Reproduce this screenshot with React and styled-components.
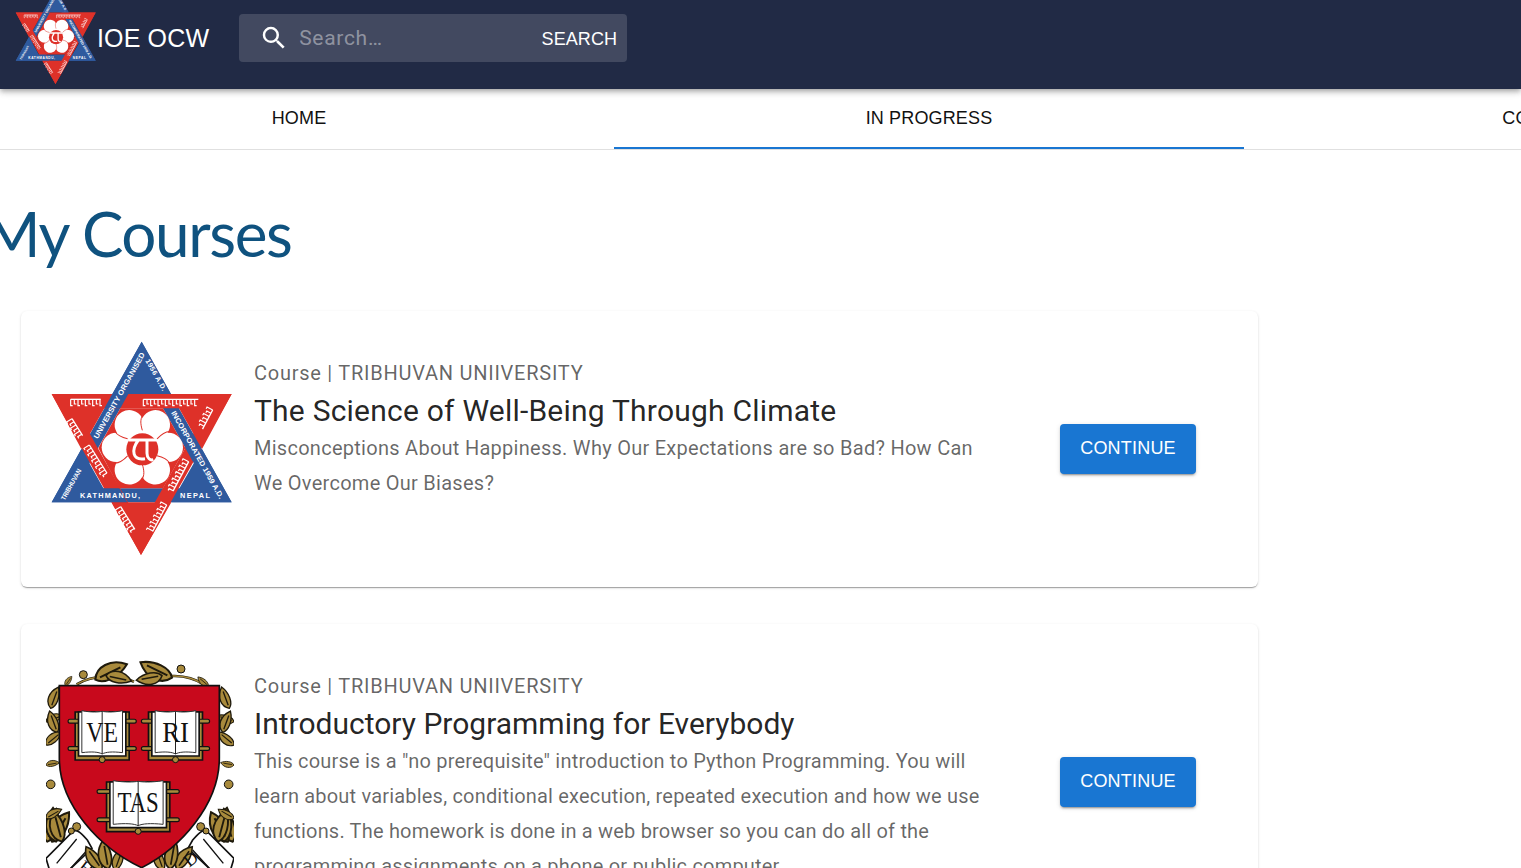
import { MdSearch } from "react-icons/md";
import styled, { createGlobalStyle } from "styled-components";

const GlobalStyle = createGlobalStyle`
    html, body {
        margin: 0;
        height: 868px;
        overflow: hidden;
        background: #fff;
        font-family: "Roboto", "Liberation Sans", sans-serif;
    }
`;

const Page = styled.div`
    width: 1521px;
    height: 868px;
    overflow: hidden;
`;

const Header = styled.header`
    position: relative;
    z-index: 2;
    display: flex;
    align-items: flex-start;
    height: 89px;
    overflow: hidden;
    padding-left: 13px;
    background: #212a45;
    box-shadow: 0 2px 4px -1px rgba(0, 0, 0, 0.2), 0 4px 5px rgba(0, 0, 0, 0.14), 0 1px 10px rgba(0, 0, 0, 0.12);
`;

const LogoBox = styled.div`
    flex: none;
    width: 84px;
    height: 96px;
    margin-top: -11px;
`;

const Brand = styled.div`
    margin: 21px 30px 0 0;
    color: #fff;
    font-family: "Liberation Sans", sans-serif;
    font-size: 25px;
    line-height: 34px;
    letter-spacing: 0.15px;
`;

const Search = styled.form`
    display: flex;
    align-items: center;
    width: 388px;
    height: 48px;
    margin-top: 14px;
    border-radius: 4px;
    background: rgba(255, 255, 255, 0.15);
    color: #fff;

    svg {
        flex: none;
        margin-left: 20px;
    }
`;

const SearchInput = styled.input`
    flex: 1;
    min-width: 0;
    margin-left: 10px;
    padding: 0;
    border: 0;
    outline: 0;
    background: transparent;
    color: #fff;
    font-family: "Roboto", sans-serif;
    font-size: 21px;
    letter-spacing: 0.7px;

    &::placeholder {
        color: rgba(255, 255, 255, 0.42);
        opacity: 1;
    }
`;

const SearchButton = styled.button`
    margin-right: 10px;
    padding: 2px 0 0;
    border: 0;
    background: none;
    color: #fff;
    font-family: "Liberation Sans", sans-serif;
    font-size: 18px;
    letter-spacing: 0.1px;
`;

const Tabs = styled.nav`
    display: flex;
    height: 60px;
    overflow: hidden;
    border-bottom: 1px solid #e0e0e0;
`;

const Tab = styled.a`
    flex: none;
    box-sizing: border-box;
    width: 630px;
    height: 60px;
    padding-top: 19px;
    border-bottom: 2px solid ${(p) => (p.$active ? "#1976d2" : "transparent")};
    margin-left: ${(p) => (p.$first ? "-16px" : "0")};
    color: #111;
    font-family: "Liberation Sans", sans-serif;
    font-size: 18px;
    line-height: 21px;
    letter-spacing: 0.15px;
    text-align: center;
`;

const Main = styled.main`
    padding: 0 0 0 21px;
`;

const Heading = styled.h1`
    margin: 43px 0 38px -38px;
    color: #0f527f;
    font-family: "Lato", sans-serif;
    font-size: 62px;
    font-weight: 400;
    line-height: 80px;
    letter-spacing: -1.4px;
`;

const CourseList = styled.div`
    display: flex;
    flex-direction: column;
    gap: 37px;
    width: 1237px;
`;

const Card = styled.article`
    display: flex;
    align-items: flex-start;
    border-radius: 6px;
    background: #fff;
    box-shadow: 0 2px 1px -1px rgba(0, 0, 0, 0.2), 0 1px 1px rgba(0, 0, 0, 0.14), 0 1px 3px rgba(0, 0, 0, 0.12);
`;

const CourseArt = styled.div`
    flex: none;
    width: 188px;
    height: 216px;
    margin: 30px 20px 30px 25px;
`;

const CourseText = styled.div`
    flex: none;
    width: 736px;
    padding: 47px 0 56px;
`;

const Overline = styled.div`
    color: rgba(0, 0, 0, 0.62);
    font-size: 20px;
    line-height: 30px;
    letter-spacing: 0.75px;
`;

const Title = styled.h2`
    margin: 3px 0 0;
    color: rgba(0, 0, 0, 0.87);
    font-size: 30px;
    font-weight: 400;
    line-height: 40px;
    letter-spacing: ${(p) => p.$tracking}px;
`;

const Description = styled.p`
    margin: 0;
    color: rgba(0, 0, 0, 0.6);
    font-size: 20px;
    line-height: 35px;
    letter-spacing: ${(p) => p.$tracking}px;
`;

const ActionCell = styled.div`
    align-self: center;
    margin-left: 70px;
`;

const ContinueButton = styled.button`
    width: 136px;
    height: 50px;
    padding: 0 0 2px;
    border: 0;
    border-radius: 4px;
    background: #1976d2;
    box-shadow: 0 3px 1px -2px rgba(0, 0, 0, 0.2), 0 2px 2px rgba(0, 0, 0, 0.14), 0 1px 5px rgba(0, 0, 0, 0.12);
    color: #fff;
    font-family: "Liberation Sans", sans-serif;
    font-size: 18px;
    letter-spacing: 0.2px;
`;

const BLUE = "#2f5a9e";
const RED = "#de3129";
const GOLD = "#a88a3c";

// headline bar and ticks, stands in for the tiny Devanagari lettering on the bands
function Script({ x, y, w, rotate = 0 }) {
    const ticks = [];
    for (let i = 0; i < w; i += 11) {
        ticks.push(<path key={i} d={`M${i} 0v${i % 2 ? 14 : 19}h6`} />);
    }
    return (
        <g transform={`translate(${x} ${y}) rotate(${rotate})`} fill="none" stroke="#fff" strokeWidth="3.5">
            <path d={`M0 0h${w}`} strokeWidth="4" />
            {ticks}
        </g>
    );
}

function TuLogo() {
    const lobes = [0, 60, 120, 180, 240, 300];
    const veins = [30, 90, 150, 210, 270, 330];
    return (
        <svg viewBox="48 33 564 648" width="100%" height="100%">
            {/* the star's points are solid, only the inner hexagon shows the woven bands */}
            <path fill={BLUE} fillRule="evenodd" d="M335 35L605 517H65ZM335 121L136.500 475H533.500Z" />
            <path fill={BLUE} d="M335 35L423 192H247ZM65 517H244L154 357ZM605 517H424L516 357Z" />
            <path fill={RED} fillRule="evenodd" d="M65 192H605L333 675ZM137 235L334 589L533 235Z" />
            <path fill={RED} d="M65 192H247L154 357ZM605 192H423L516 357ZM244 517H424L333 675Z" />
            <path fill={BLUE} d="M247 192H295L271 235H223Z" />
            <path fill={BLUE} d="M513.700 354L489.700 311.300L465.700 354L489.600 396.800Z" />
            <path fill={BLUE} d="M220.400 475H268.400L292 517H244Z" />
            <path fill={RED} d="M271 235H399L466 354L399 475H268L205 354Z" />
            <circle cx="337" cy="352" r="80" fill="#fff" />
            {lobes.map((a) => (
                <circle key={a} cx="415" cy="352" r="44" fill="#fff" transform={`rotate(${a} 337 352)`} />
            ))}
            {veins.map((a) => (
                <path
                    key={a}
                    d="M388 352C408 346 420 346 432 352"
                    fill="none"
                    stroke={RED}
                    strokeWidth="3"
                    transform={`rotate(${a} 337 352)`}
                />
            ))}
            <circle cx="337" cy="358" r="48" fill={RED} />
            <path
                fill="none"
                stroke="#fff"
                strokeWidth="9"
                d="M297 330H378M325 330C302 362 308 392 345 386M351 330V370C351 385 361 392 370 389"
            />
            <g fontFamily="Liberation Sans" fontWeight="700" fill="#fff" fontSize="22">
                <text transform="translate(203 328) rotate(-60.800)" textLength="292" lengthAdjust="spacingAndGlyphs">
                    UNIVERSITY ORGANISED
                </text>
                <text transform="translate(346 92) rotate(60.800)" textLength="106" fontSize="21">1956 A.D.</text>
                <text transform="translate(423 248) rotate(60.800)" textLength="298" lengthAdjust="spacingAndGlyphs">
                    INCORPORATED 1959 A.D.
                </text>
                <text transform="translate(104 512) rotate(-60.800)" textLength="104" lengthAdjust="spacingAndGlyphs" fontSize="20">
                    TRIBHUVAN
                </text>
                <text x="150" y="504" textLength="180">KATHMANDU,</text>
                <text x="450" y="504" textLength="90">NEPAL</text>
            </g>
            <Script x={122} y={208} w={90} />
            <Script x={340} y={208} w={165} />
            <Script x={126} y={266} w={60} rotate={58} />
            <Script x={178} y={345} w={100} rotate={58} />
            <Script x={548} y={240} w={65} rotate={118} />
            <Script x={476} y={395} w={100} rotate={118} />
            <Script x={272} y={530} w={80} rotate={58} />
            <Script x={410} y={525} w={90} rotate={118} />
        </svg>
    );
}

function Leaf({ x, y, r, s = 1 }) {
    return (
        <path
            transform={`translate(${x} ${y}) rotate(${r}) scale(${s})`}
            fill={GOLD}
            stroke="#1f1a0c"
            strokeWidth="4"
            d="M0 0C12 -22 44 -24 68 0C44 16 12 16 0 0ZM10 0H54"
        />
    );
}

function Book({ x, y, w, h, label, textW, textY }) {
    const m = w * 0.17;
    return (
        <g transform={`translate(${x} ${y})`}>
            <path fill={GOLD} stroke="#111" strokeWidth="5" d={`M${m - 14} 6H${w - m + 14}V${h - 2}H${m - 14}Z`} />
            <path stroke="#111" strokeWidth="15" strokeLinecap="round" d={`M5 ${h * 0.22}H${w - 5}M5 ${h * 0.76}H${w - 5}`} />
            <path stroke={GOLD} strokeWidth="8" strokeLinecap="round" d={`M5 ${h * 0.22}H${w - 5}M5 ${h * 0.76}H${w - 5}`} />
            <path fill="#fff" stroke="#111" strokeWidth="5" d={`M${m - 4} 6H${w - m + 4}V${h - 14}H${m - 4}Z`} />
            <path fill="#fff" stroke="#333" strokeWidth="3" d={`M${m + 6} 2C${w * 0.35} 8 ${w * 0.45} 6 ${w / 2} 4C${w * 0.55} 6 ${w * 0.65} 8 ${w - m - 6} 2V${h - 24}C${w * 0.65} ${h - 28} ${w * 0.55} ${h - 26} ${w / 2} ${h - 20}C${w * 0.45} ${h - 26} ${w * 0.35} ${h - 28} ${m + 6} ${h - 24}Z`} />
            <path stroke="#222" strokeWidth="3" d={`M${w / 2} 4V${h - 20}`} />
            <circle cx={w / 2} cy={h - 3} r="9" fill={GOLD} stroke="#111" strokeWidth="3" />
            <text
                x={w / 2}
                y={textY}
                textAnchor="middle"
                fontFamily="Liberation Serif"
                fontSize="90"
                fill="#111"
                textLength={textW}
                lengthAdjust="spacingAndGlyphs"
            >
                {label}
            </text>
        </g>
    );
}

function HarvardShield() {
    // left hand laurel, the right hand one is its mirror image
    const sideLeaves = [
        [62, 190, -70, 1], [48, 230, -20, 0.8], [82, 262, -110, 1], [48, 300, -40, 0.9], [48, 360, -10, 0.6],
        [52, 590, -75, 1.5], [66, 590, -60, 1.5], [78, 590, -95, 1.5], [96, 590, -105, 1.4], [48, 520, -30, 0.8],
    ];
    return (
        <svg viewBox="48 27 564 648" width="100%" height="100%">
            {sideLeaves.map(([x, y, r, s]) => (
                <g key={`${x}${y}${r}`}>
                    <Leaf x={x} y={y} r={r} s={s} />
                    <Leaf x={660 - x} y={y} r={-180 - r} s={s} />
                </g>
            ))}
            <path fill="none" stroke="#1f1a0c" strokeWidth="8" d="M140 118C190 88 260 88 312 110M346 110C400 88 470 84 520 118" />
            <path fill="none" stroke={GOLD} strokeWidth="4" d="M140 118C190 88 260 88 312 110M346 110C400 88 470 84 520 118" />
            <Leaf x={196} y={104} r={-26} s={1.55} />
            <Leaf x={228} y={92} r={12} s={1.15} />
            <Leaf x={426} y={98} r={-154} s={1.55} />
            <Leaf x={396} y={92} r={170} s={1.15} />
            <Leaf x={106} y={122} r={-55} s={0.5} />
            <Leaf x={535} y={122} r={-140} s={0.6} />
            <circle cx="160" cy="89" r="12" fill={GOLD} stroke="#111" strokeWidth="3" />
            <circle cx="453" cy="72" r="12" fill={GOLD} stroke="#111" strokeWidth="3" />
            <circle cx="62" cy="418" r="13" fill={GOLD} stroke="#111" strokeWidth="3" />
            <circle cx="596" cy="418" r="13" fill={GOLD} stroke="#111" strokeWidth="3" />

            <g fill="#fff" stroke="#111" strokeWidth="5">
                <path d="M48 640L128 560C140 552 150 560 172 585L186 610L112 680H60Z" />
                <path d="M612 640L532 560C520 552 510 560 488 585L474 610L548 680H600Z" />
            </g>
            <path fill="none" stroke="#111" strokeWidth="4" d="M80 655L140 582M120 672L172 615M580 655L520 582M540 672L488 615" />
            <circle cx="140" cy="545" r="12" fill={GOLD} stroke="#111" strokeWidth="3" />
            <circle cx="124" cy="558" r="9" fill={GOLD} stroke="#111" strokeWidth="3" />
            <circle cx="512" cy="545" r="12" fill={GOLD} stroke="#111" strokeWidth="3" />
            <circle cx="528" cy="558" r="9" fill={GOLD} stroke="#111" strokeWidth="3" />
            <Leaf x={215} y={672} r={-125} s={1.2} />
            <Leaf x={235} y={672} r={-100} s={1.3} />
            <Leaf x={255} y={675} r={-70} s={1} />
            <Leaf x={440} y={672} r={-55} s={1.2} />
            <Leaf x={420} y={672} r={-80} s={1.3} />
            <Leaf x={400} y={675} r={-110} s={1} />
            <text transform="translate(142 672) rotate(38)" fontFamily="Liberation Serif" fontSize="54" fill="#111">H</text>
            <text transform="translate(478 668) rotate(-38)" fontFamily="Liberation Serif" fontSize="54" fill="#111">D</text>

            <path
                fill="#c8091c"
                stroke="#111"
                strokeWidth="5"
                d="M88 122H568V340C568 480 450 610 335 668C210 610 88 480 88 340Z"
            />
            <Book x={115} y={195} w={203} h={152} label="VE" textW={95} textY={95} />
            <Book x={335} y={195} w={203} h={152} label="RI" textW={80} textY={95} />
            <Book x={202} y={405} w={245} h={157} label="TAS" textW={124} textY={95} />
        </svg>
    );
}

const courses = [
    {
        title: "The Science of Well-Being Through Climate",
        titleTracking: 0.22,
        description:
            "Misconceptions About Happiness. Why Our Expectations are so Bad? How Can We Overcome Our Biases?",
        textTracking: 0.27,
        Art: TuLogo,
    },
    {
        title: "Introductory Programming for Everybody",
        titleTracking: 0,
        description:
            'This course is a "no prerequisite" introduction to Python Programming. You will learn about variables, conditional execution, repeated execution and how we use functions. The homework is done in a web browser so you can do all of the programming assignments on a phone or public computer.',
        textTracking: 0.19,
        Art: HarvardShield,
    },
];

function App() {
    return (
        <Page>
            <GlobalStyle />
            <Header>
                <LogoBox>
                    <TuLogo />
                </LogoBox>
                <Brand>IOE OCW</Brand>
                <Search>
                    <MdSearch size={30} />
                    <SearchInput placeholder="Search…" />
                    <SearchButton type="button">SEARCH</SearchButton>
                </Search>
            </Header>
            <Tabs>
                <Tab $first>HOME</Tab>
                <Tab $active>IN PROGRESS</Tab>
                <Tab>COMPLETED</Tab>
            </Tabs>
            <Main>
                <Heading>My Courses</Heading>
                <CourseList>
                    {courses.map(({ title, titleTracking, description, textTracking, Art }) => (
                        <Card key={title}>
                            <CourseArt>
                                <Art />
                            </CourseArt>
                            <CourseText>
                                <Overline>Course | TRIBHUVAN UNIIVERSITY</Overline>
                                <Title $tracking={titleTracking}>{title}</Title>
                                <Description $tracking={textTracking}>{description}</Description>
                            </CourseText>
                            <ActionCell>
                                <ContinueButton>CONTINUE</ContinueButton>
                            </ActionCell>
                        </Card>
                    ))}
                </CourseList>
            </Main>
        </Page>
    );
}

export default App;
